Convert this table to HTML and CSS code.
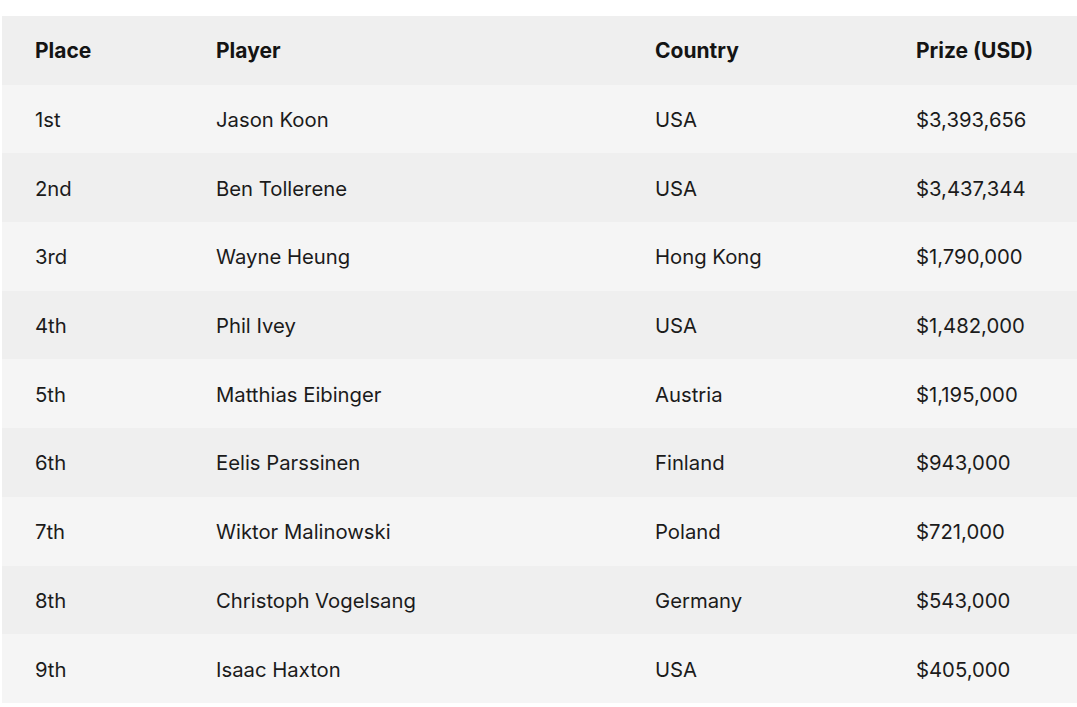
FILE: index.html
```html
<!DOCTYPE html>
<html>
<head>
<meta charset="utf-8">
<link rel="stylesheet" href="styles.css">
</head>
<body>
<div class="wrap">
<table class="results">
  <colgroup>
    <col class="c-place"><col class="c-player"><col class="c-country"><col class="c-prize">
  </colgroup>
  <thead>
    <tr><th>Place</th><th>Player</th><th>Country</th><th>Prize (USD)</th></tr>
  </thead>
  <tbody>
    <tr><td>1st</td><td>Jason Koon</td><td>USA</td><td>$3,393,656</td></tr>
    <tr><td>2nd</td><td>Ben Tollerene</td><td>USA</td><td>$3,437,344</td></tr>
    <tr><td>3rd</td><td>Wayne Heung</td><td>Hong Kong</td><td>$1,790,000</td></tr>
    <tr><td>4th</td><td>Phil Ivey</td><td>USA</td><td>$1,482,000</td></tr>
    <tr><td>5th</td><td>Matthias Eibinger</td><td>Austria</td><td>$1,195,000</td></tr>
    <tr><td>6th</td><td>Eelis Parssinen</td><td>Finland</td><td>$943,000</td></tr>
    <tr><td>7th</td><td>Wiktor Malinowski</td><td>Poland</td><td>$721,000</td></tr>
    <tr><td>8th</td><td>Christoph Vogelsang</td><td>Germany</td><td>$543,000</td></tr>
    <tr><td>9th</td><td>Isaac Haxton</td><td>USA</td><td>$405,000</td></tr>
  </tbody>
</table>
</div>
</body>
</html>
```
FILE: styles.css
```css
html, body {
  margin: 0;
  padding: 0;
  background: #ffffff;
}
.wrap {
  padding: 16px 0 0 2px;
}
.results {
  width: 1075px;
  border-collapse: collapse;
  table-layout: fixed;
  font-family: Inter, "Noto Sans", sans-serif;
  font-size: 20.3px;
  color: #1b1b1b;
}
.c-place { width: 181px; }
.c-player { width: 439px; }
.c-country { width: 261px; }
.c-prize { width: 194px; }
.results th,
.results td {
  text-align: left;
  padding: 1px 0 0 33px;
  height: 67.7px;
  vertical-align: middle;
}
.results th {
  font-size: 21px;
  font-weight: 700;
  color: #141414;
}
.results thead tr { background: #efefef; }
.results tbody tr:nth-child(odd) { background: #f5f5f5; }
.results tbody tr:nth-child(even) { background: #efefef; }
```
